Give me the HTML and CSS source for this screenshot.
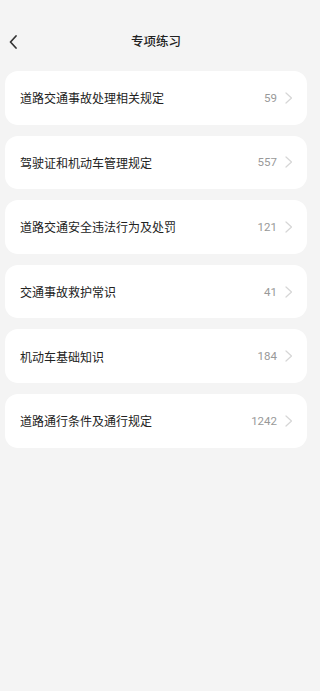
FILE: index.html
```html
<!DOCTYPE html>
<html lang="zh-CN">
<head>
<meta charset="utf-8">
<meta name="viewport" content="width=device-width, initial-scale=1">
<title>专项练习</title>
<link rel="stylesheet" href="styles.css">
</head>
<body>
<div class="page">
  <header class="nav">
    <span class="back">
      <svg width="8" height="14" viewBox="0 0 8 14"><path d="M7 1 L1.5 7 L7 13" fill="none" stroke="#333" stroke-width="1.7" stroke-linecap="round" stroke-linejoin="round"/></svg>
    </span>
    <h1 class="title">专项练习</h1>
  </header>
  <ul class="list">
    <li class="card"><span class="name">道路交通事故处理相关规定</span><span class="count">59</span><svg class="arrow" width="8" height="12" viewBox="0 0 8 12"><path d="M1 1 L6.5 6 L1 11" fill="none" stroke="#d6d6d6" stroke-width="1.2" stroke-linecap="round" stroke-linejoin="round"/></svg></li>
    <li class="card"><span class="name">驾驶证和机动车管理规定</span><span class="count">557</span><svg class="arrow" width="8" height="12" viewBox="0 0 8 12"><path d="M1 1 L6.5 6 L1 11" fill="none" stroke="#d6d6d6" stroke-width="1.2" stroke-linecap="round" stroke-linejoin="round"/></svg></li>
    <li class="card"><span class="name">道路交通安全违法行为及处罚</span><span class="count">121</span><svg class="arrow" width="8" height="12" viewBox="0 0 8 12"><path d="M1 1 L6.5 6 L1 11" fill="none" stroke="#d6d6d6" stroke-width="1.2" stroke-linecap="round" stroke-linejoin="round"/></svg></li>
    <li class="card"><span class="name">交通事故救护常识</span><span class="count">41</span><svg class="arrow" width="8" height="12" viewBox="0 0 8 12"><path d="M1 1 L6.5 6 L1 11" fill="none" stroke="#d6d6d6" stroke-width="1.2" stroke-linecap="round" stroke-linejoin="round"/></svg></li>
    <li class="card"><span class="name">机动车基础知识</span><span class="count">184</span><svg class="arrow" width="8" height="12" viewBox="0 0 8 12"><path d="M1 1 L6.5 6 L1 11" fill="none" stroke="#d6d6d6" stroke-width="1.2" stroke-linecap="round" stroke-linejoin="round"/></svg></li>
    <li class="card"><span class="name">道路通行条件及通行规定</span><span class="count">1242</span><svg class="arrow" width="8" height="12" viewBox="0 0 8 12"><path d="M1 1 L6.5 6 L1 11" fill="none" stroke="#d6d6d6" stroke-width="1.2" stroke-linecap="round" stroke-linejoin="round"/></svg></li>
  </ul>
</div>
</body>
</html>
```

FILE: styles.css
```css
* { box-sizing: border-box; }
html, body {
  margin: 0;
  padding: 0;
  background: #f4f4f4;
  font-family: Roboto, "Noto Sans CJK SC", sans-serif;
  color: #222;
}
.page {
  width: 312px;
  min-height: 691px;
  background: #f4f4f4;
}
.nav {
  position: relative;
  height: 71px;
  padding-top: 22px;
}
.back {
  position: absolute;
  left: 9px;
  top: 35px;
  display: flex;
}
.title {
  margin: 0;
  height: 40px;
  line-height: 40px;
  text-align: center;
  font-size: 12.5px;
  font-weight: 500;
  color: #222;
}
.list {
  list-style: none;
  margin: 0;
  padding: 0 5px;
  display: flex;
  flex-direction: column;
  gap: 11px;
}
.card {
  height: 53.6px;
  background: #fff;
  border-radius: 13px;
  display: flex;
  align-items: center;
  padding: 0 14px 0 15px;
}
.name {
  flex: 1;
  font-size: 12px;
  color: #222;
}
.count {
  font-size: 11.5px;
  color: #999;
  margin-right: 8px;
}
.arrow { display: block; }
```
